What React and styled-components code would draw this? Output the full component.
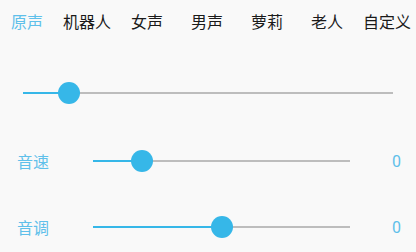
import React from 'react'
import styled, { createGlobalStyle } from 'styled-components'

const TABS = ['原声', '机器人', '女声', '男声', '萝莉', '老人', '自定义']

const ROWS = [
  { label: '音速', value: 19, text: '0' },
  { label: '音调', value: 50, text: '0' }
]

const Slider = ({ value }) => (
  <SliderTrack>
    <Fill style={{ width: `${value}%` }} />
    <Rest />
    <Thumb style={{ left: `${value}%` }} />
  </SliderTrack>
)

const App = () => (
  <Page>
    <GlobalStyle />
    <Tabs>
      {TABS.map((t, i) => (
        <Tab key={t} active={i === 0}>{t}</Tab>
      ))}
    </Tabs>
    <MainSlider>
      <Slider value={12.4} />
    </MainSlider>
    {ROWS.map((r, i) => (
      <Row key={r.label} first={i === 0}>
        <Label>{r.label}</Label>
        <RowSlider>
          <Slider value={r.value} />
        </RowSlider>
        <Value>{r.text}</Value>
      </Row>
    ))}
  </Page>
)

export default App

/*
Styles
 */

const BLUE = '#36b7e8'

const GlobalStyle = createGlobalStyle`
  html, body {
    margin: 0;
    padding: 0;
    background: #f9f9f9;
  }
  body {
    font-family: 'Noto Sans CJK SC', 'Noto Sans', sans-serif;
  }
`

const Page = styled.div`
  width: 416px;
  height: 252px;
  overflow: hidden;
  background: #f9f9f9;
  display: flex;
  flex-direction: column;
`

const Tabs = styled.div`
  display: flex;
  align-items: center;
  height: 42px;
  margin-left: -3px;
`

const Tab = styled.div`
  flex: 0 0 60px;
  text-align: center;
  font-size: 16px;
  line-height: 20px;
  white-space: nowrap;
  color: ${p => (p.active ? '#5fc0ea' : '#1a1a1a')};
`

const MainSlider = styled.div`
  margin-top: 40px;
  padding: 0 23px;
`

const Row = styled.div`
  display: flex;
  align-items: center;
  height: 22px;
  margin-top: ${p => (p.first ? '46px' : '44px')};
  padding-left: 17px;
`

const Label = styled.div`
  width: 76px;
  font-size: 16px;
  line-height: 20px;
  color: #5fc0ea;
`

const RowSlider = styled.div`
  width: 257px;
`

const Value = styled.div`
  margin-left: auto;
  padding-right: 15px;
  font-family: Roboto, 'Noto Sans', sans-serif;
  font-size: 16px;
  color: #5fc0ea;
`

const SliderTrack = styled.div`
  position: relative;
  display: flex;
  align-items: center;
  height: 22px;
`

const Fill = styled.div`
  height: 2px;
  background: ${BLUE};
`

const Rest = styled.div`
  flex: 1;
  height: 2px;
  background: #bdbdbd;
`

const Thumb = styled.div`
  position: absolute;
  top: 0;
  width: 22px;
  height: 22px;
  margin-left: -11px;
  border-radius: 50%;
  background: ${BLUE};
`
